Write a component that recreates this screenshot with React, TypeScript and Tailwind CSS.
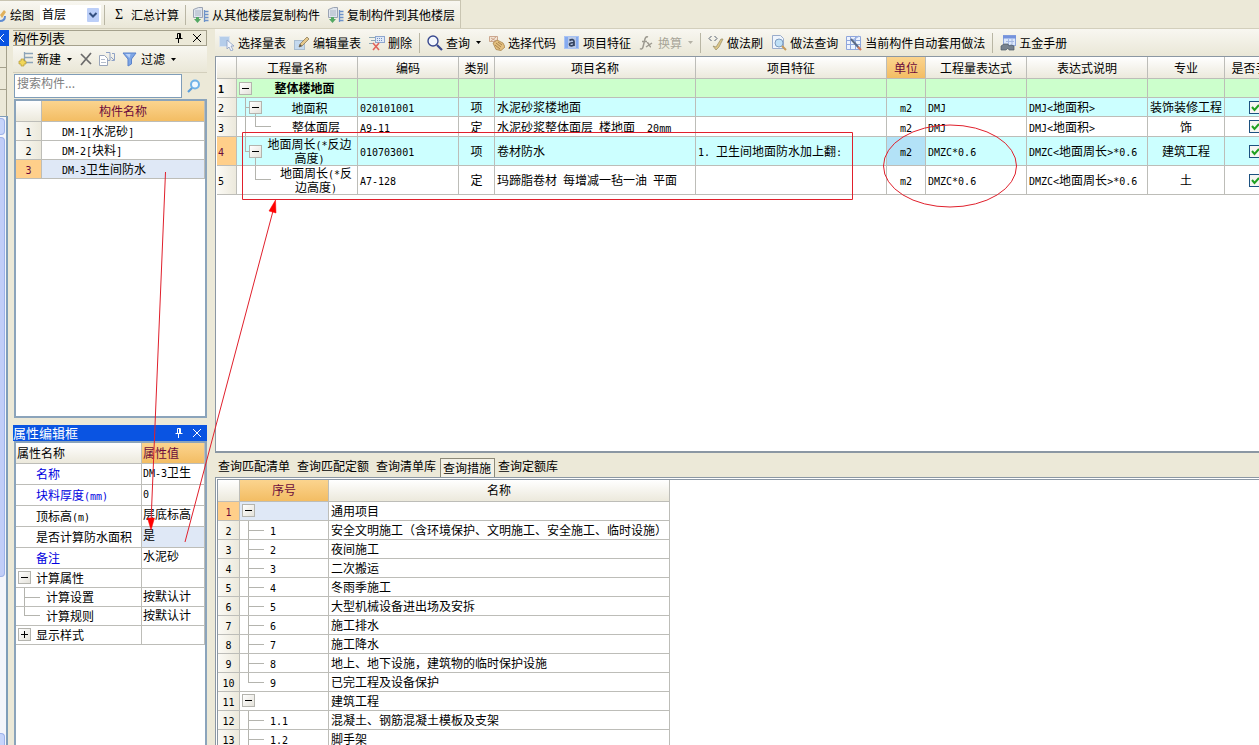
import { Fragment, type ReactNode } from "react";
import clsx from "clsx";

const HEAD = "bg-gradient-to-b from-white to-[#ece9dc]";
const GOLD = "bg-gradient-to-b from-[#fbd48e] to-[#f3bd63] text-[#6b0a3c]";
const NUM = "bg-gradient-to-r from-[#fbfaf5] to-[#ece9dc]";
const CELL = "border-r border-b border-[#bdbdb8] p-0";

// Latin runs use a half-width face so they line up with the Chinese glyphs
function Txt({ children }: { children: string }) {
  return (
    <>
      {children.split(/([\x20-\x7e]+)/).map((part, i) =>
        i % 2 ? (
          <span key={i} className="whitespace-pre-wrap font-['DejaVu_Sans_Mono',monospace] text-[10px] leading-none">
            {part}
          </span>
        ) : (
          <Fragment key={i}>{part}</Fragment>
        )
      )}
    </>
  );
}

function Icon({ children }: { children: ReactNode }) {
  return (
    <svg width="16" height="16" viewBox="0 0 16 16" fill="none" className="shrink-0" aria-hidden="true">
      {children}
    </svg>
  );
}

const SelectIcon = () => (
  <Icon>
    <rect x="0.5" y="1.5" width="10" height="10" fill="#b5cdea" stroke="#dbe4ee" />
    <path d="M8 5v9l2-2 2 4 2-1-2-4h3z" fill="#f3f6fb" stroke="#8c9fc4" strokeWidth="0.8" />
  </Icon>
);

const EditIcon = () => (
  <Icon>
    <rect x="0.5" y="5.5" width="10" height="9" fill="#c4d9ee" stroke="#a9bdd0" />
    <path d="M5 12l1-3 7-7 2 2-7 7z" fill="#e6c98c" stroke="#8d7c5c" strokeWidth="0.8" />
    <path d="M5 12l1-3 2 2z" fill="#555" />
  </Icon>
);

const DeleteIcon = () => (
  <Icon>
    <path d="M0 2.5h6M2 5.5h4M0 8.5h4" stroke="#8fa8b4" />
    <rect x="6.5" y="1.5" width="9" height="6" fill="#dfe9f7" stroke="#8ea6cf" />
    <path d="M8 3.5h6M8 5.5h6" stroke="#7791c4" strokeDasharray="1 1" />
    <path d="M4 8l6 7M10 8l-6 7" stroke="#e0645c" strokeWidth="1.6" />
  </Icon>
);

const FindIcon = () => (
  <Icon>
    <circle cx="6" cy="6" r="5" fill="#f3f7fd" stroke="#39498f" strokeWidth="1.4" />
    <path d="M10 10l5 5" stroke="#39498f" strokeWidth="2.2" />
  </Icon>
);

const CodeIcon = () => (
  <Icon>
    <path d="M0.5 1.5h8v5h-8zM2 3l5 3M7 2L2 6" fill="#f2e3d3" stroke="#c79f85" strokeWidth="0.9" />
    <path d="M4 8l4-3 6 3 2 4-4 3.500-5-1z" fill="#e3bf7e" stroke="#a9844b" strokeWidth="0.8" />
    <path d="M7 8l5 4M9 7l4 3M6 10l5 4" stroke="#9a7440" strokeWidth="0.8" />
  </Icon>
);

const FeatureIcon = () => (
  <Icon>
    <rect x="0.5" y="1.5" width="14" height="12" fill="#86abef" stroke="#a9c3f3" />
    <rect x="4" y="2" width="8" height="11" fill="#b9c9e6" />
    <path d="M5.500 5.500c2-1.500 4.500-1 4.500 1V11M10 7.500c-3 0-4.500.5-4.500 2s3 2 4.500 0" stroke="#33425e" strokeWidth="1.7" />
  </Icon>
);

const FxIcon = () => (
  <Icon>
    <path d="M9 2C7 1 6 3 5.500 6L4 12c-.5 2-2 2.500-3 1.500M3 6.500h5M8 8c2-1 2 4 4 4M13 8L7 12" stroke="#9d9a90" strokeWidth="1.5" />
  </Icon>
);

const BrushIcon = () => (
  <Icon>
    <path d="M3.500 1L1 3.500 3.500 6M6.500 1L9 3.500 6.500 6" stroke="#555f70" />
    <path d="M15 4l-4 8-3 3-3-4 3 1 5-8z" fill="#dcc686" stroke="#9a8c66" strokeWidth="0.7" />
  </Icon>
);

const PageFindIcon = () => (
  <Icon>
    <path d="M1.500 0.500h8l3 3v10h-11z" fill="#eef4fc" stroke="#9aaccb" />
    <circle cx="8" cy="8" r="4" fill="#bfe0f6" stroke="#7d9cc0" />
    <path d="M11 11l4 4" stroke="#c79a5a" strokeWidth="2" />
  </Icon>
);

const AutoIcon = () => (
  <Icon>
    <path d="M0.500 1.500h14v13h-14zM0.500 5.500h14M0.500 9.500h14M4.500 1.500v13M9.500 1.500v13" fill="#edf3fe" stroke="#8fa6dc" />
    <path d="M5 4l8 9" stroke="#5c6a86" strokeWidth="2" />
    <path d="M12 12l3 3" stroke="#d27a5b" strokeWidth="2.2" />
    <path d="M7 5l6-4" stroke="#9db3e2" strokeWidth="1.5" />
  </Icon>
);

const ManualIcon = () => (
  <Icon>
    <rect x="3.5" y="0.5" width="12" height="10" fill="#dbe7fb" stroke="#8ea6dd" />
    <path d="M3 2h13" stroke="#7593dd" strokeWidth="3" />
    <path d="M6 6.500h8M8.500 4v6M12 4v6" stroke="#a5b8e2" />
    <path d="M1 11l3-2h4l1 2 2-1 3 1v4h-5l-1-2-2 2H1z" fill="#77828f" stroke="#4e5966" strokeWidth="0.7" />
  </Icon>
);

const CopyFloorIcon = () => (
  <Icon>
    <path d="M0.500 2.500l5-2h4v10h-9z" fill="#dfe5ee" stroke="#9aa3b2" />
    <path d="M2 4h6M2 6h6M2 8h6" stroke="#aab4c4" />
    <path d="M11.500 3v12M11.500 4.500h4M11.500 7.500h4M11.500 10.500h4M11.500 13.500h4" stroke="#6c92c9" strokeWidth="1.3" />
    <path d="M3 10h3v2h2l-3.500 4L1 12h2z" fill="#53a863" />
  </Icon>
);

const NewIcon = () => (
  <Icon>
    <path d="M6.500 1v11M7 2.500h8M7 6.500h8M7 11.500h8" stroke="#8ba3b8" strokeWidth="1.3" />
    <path d="M3 8h3v2h2v3H6v2H3v-2H1v-3h2z" fill="#f2d75a" stroke="#b19a38" strokeWidth="0.7" />
  </Icon>
);

const CrossIcon = () => (
  <Icon>
    <path d="M3 3l10 10M13 2L3 14" stroke="#6b6b6b" strokeWidth="1.7" />
  </Icon>
);

const CopyIcon = () => (
  <Icon>
    <path d="M0.500 4.500h5l3 3v7h-8z" fill="#fff" stroke="#9aa6bb" />
    <path d="M2 8.500h4M2 11.500h5" stroke="#b4bdcc" />
    <path d="M7 1.500h4v8M11 9.500H9M13 2.500h2.500v7h-3M12 6l3 3" stroke="#8fa2c6" />
  </Icon>
);

const FilterIcon = () => (
  <Icon>
    <path d="M1 2h13L9.500 8v5L6 15V8z" fill="#7ea6e6" stroke="#5b83cb" />
    <path d="M3.500 3h5L7.500 7z" fill="#bcd3f7" />
  </Icon>
);

function Caret({ dim }: { dim?: boolean }) {
  return (
    <svg width="5" height="3" viewBox="0 0 5 3" aria-hidden="true" className={dim ? "fill-[#b5b2a6]" : "fill-black"}>
      <path d="M0 0h5L2.500 3z" />
    </svg>
  );
}

const Sep = () => <div className="mx-[3px] h-5 w-px shrink-0 bg-[#b9b6a4]" />;

type ToolProps = { icon: ReactNode; label: string; caret?: boolean; disabled?: boolean };

function Tool({ icon, label, caret, disabled }: ToolProps) {
  return (
    <button
      type="button"
      disabled={disabled}
      className={clsx("flex shrink-0 items-center gap-[3px] px-1", disabled && "text-[#a8a598]")}
    >
      {icon}
      {label}
      {caret && (
        <span className="pl-[3px]">
          <Caret dim={disabled} />
        </span>
      )}
    </button>
  );
}

function Toggle({ open = true }: { open?: boolean }) {
  return (
    <button
      type="button"
      aria-label={open ? "收起" : "展开"}
      className="flex size-[13px] shrink-0 items-center justify-center border border-[#b4b4ae] bg-gradient-to-br from-white to-[#e4e2da]"
    >
      <svg width="7" height="7" viewBox="0 0 7 7" stroke="#000" aria-hidden="true">
        <path d={open ? "M0 3.500h7" : "M0 3.500h7M3.500 0v7"} />
      </svg>
    </button>
  );
}

function PanelTitle({ title, active }: { title: string; active?: boolean }) {
  return (
    <div
      className={clsx(
        "flex h-4 shrink-0 items-center justify-between border border-l-0 pr-[5px] text-[13px] leading-[14px]",
        active ? "border-[#0a54e2] bg-[#0a54e2] text-white" : "border-[#a5a18c]"
      )}
    >
      <h2>{title}</h2>
      <div className="flex items-center gap-[10px]">
        <button type="button" aria-label="固定">
          <svg width="8" height="10" viewBox="0 0 8 10" fill="none" stroke="currentColor" aria-hidden="true">
            <path d="M2.500 5.500v-5h3v5M4.500 1v4M0.500 5.500h7M3.500 6v4" />
          </svg>
        </button>
        <button type="button" aria-label="关闭">
          <svg width="8" height="8" viewBox="0 0 8 8" stroke="currentColor" aria-hidden="true">
            <path d="M0 0l8 8M8 0L0 8" />
          </svg>
        </button>
      </div>
    </div>
  );
}

function TopBar() {
  return (
    <header className="flex h-[29px] shrink-0 items-center border-b border-[#d3cfbc] bg-[#ece9d8]">
      <div className="flex h-full items-center border-t border-r border-[#c9c5b2] bg-gradient-to-b from-[#f8f7f1] to-[#eae7d7] pr-px">
        <svg width="7" height="16" viewBox="0 0 7 16" aria-hidden="true">
          <path d="M0 8l4-5 2 2-4 6z" fill="#e0b15c" />
          <path d="M0 14c3 0 5-1 5-5" stroke="#5e8bd2" strokeWidth="2" fill="none" />
        </svg>
        <label htmlFor="floor" className="px-[3px]">绘图</label>
        <div className="relative ml-[3px]">
          <select id="floor" className="h-5 w-[61px] appearance-none bg-white pb-0.5 pl-[2px]">
            <option>首层</option>
          </select>
          <svg width="12" height="14" viewBox="0 0 12 14" aria-hidden="true" className="pointer-events-none absolute top-[3px] right-[2px]">
            <rect width="12" height="14" rx="1" fill="#bccff8" />
            <path d="M2.500 5L6 8.500 9.500 5" fill="none" stroke="#34507f" strokeWidth="2" />
          </svg>
        </div>
        <Sep />
        <button type="button" className="flex items-center gap-[7px] pr-[3px] pl-[6px]">
          <span className="w-[10px] font-['Liberation_Serif',serif] text-sm">Σ</span>
          汇总计算
        </button>
        <Sep />
        <Tool icon={<CopyFloorIcon />} label="从其他楼层复制构件" />
        <Tool icon={<CopyFloorIcon />} label="复制构件到其他楼层" />
      </div>
    </header>
  );
}

// Narrow sliver of the docked navigation column
function NavStrip() {
  return (
    <aside className="flex w-[9px] shrink-0 flex-col pt-px">
      <div className="flex h-4 items-center bg-[#0a54e2] text-white">
        <svg width="4" height="8" viewBox="0 0 4 8" stroke="currentColor" aria-hidden="true">
          <path d="M-4 0l8 8M4 0l-8 8" />
        </svg>
      </div>
      <div className="mr-0.5 h-[22px] border-r border-b border-[#a5a18c]" />
      <div className="mr-0.5 h-[22px] border-r border-b border-[#a5a18c]" />
      <div className="mr-0.5 h-[26px] border-r border-[#a5a18c]" />
      <div className="mr-px flex flex-1 flex-col border-t border-r-2 border-[#7f9db9] bg-[#f4f5fb] pr-px">
        <div className="mt-px h-[17px] rounded-r border border-l-0 border-[#9db2ea] bg-[#c6d4fb]" />
        <div className="mt-0.5 h-[70%] rounded-r border border-l-0 border-[#9db2ea] bg-[#c1cdf8]" />
        <div className="mt-auto h-3 rounded-tr border border-b-0 border-l-0 border-[#9db2ea] bg-[#c6d4fb]" />
      </div>
    </aside>
  );
}

const components = ["DM-1[水泥砂]", "DM-2[块料]", "DM-3卫生间防水"];

function ComponentList() {
  return (
    <>
      <PanelTitle title="构件列表" />
      <div className="flex h-[27px] shrink-0 items-center border-b border-[#d3cfbc] bg-gradient-to-b from-[#f8f7f1] to-[#eae7d7] pl-px">
        <Tool icon={<NewIcon />} label="新建" caret />
        <button type="button" aria-label="删除构件" className="px-[2px]"><CrossIcon /></button>
        <button type="button" aria-label="复制构件" className="px-[3px]"><CopyIcon /></button>
        <Tool icon={<FilterIcon />} label="过滤" caret />
      </div>
      <div className="flex h-[26px] shrink-0 items-center gap-[5px] pl-px">
        <input
          type="text"
          aria-label="搜索构件"
          placeholder="搜索构件..."
          className="mb-px h-6 w-[168px] border border-[#7f9db9] bg-white pb-[6px] pl-[2px] placeholder:text-[#808080]"
        />
        <button type="button" aria-label="搜索">
          <svg width="14" height="14" viewBox="0 0 14 14" fill="none" aria-hidden="true">
            <circle cx="8" cy="5.5" r="4" fill="#eff8ff" stroke="#6fb2e8" strokeWidth="2" />
            <path d="M5 9l-4 4" stroke="#5a9ddb" strokeWidth="2.2" />
          </svg>
        </button>
      </div>
      <div className="ml-px min-h-0 flex-[104] overflow-hidden border-2 border-[#8ba4bb] bg-white">
        <table className="w-full table-fixed border-separate border-spacing-0">
          <thead>
            <tr className="h-[21px]">
              <th className={clsx(CELL, HEAD, "w-[26px]")} aria-label="序号" />
              <th className={clsx(CELL, GOLD, "font-normal")}>构件名称</th>
            </tr>
          </thead>
          <tbody>
            {components.map((name, i) => (
              <tr key={name} className="h-[19px]">
                <td className={clsx(CELL, "text-center", i === 2 ? "bg-[#ffcf8a] text-[#6b0a3c]" : NUM)}>
                  <Txt>{String(i + 1)}</Txt>
                </td>
                <td className={clsx(CELL, "pl-5", i === 2 && "bg-[#dfe8f6]")}>
                  <Txt>{name}</Txt>
                </td>
              </tr>
            ))}
          </tbody>
        </table>
      </div>
    </>
  );
}

const props = [
  { name: "名称", value: "DM-3卫生", blue: true },
  { name: "块料厚度(mm)", value: "0", blue: true },
  { name: "顶标高(m)", value: "层底标高" },
  { name: "是否计算防水面积", value: "是", active: true },
  { name: "备注", value: "水泥砂", blue: true },
];

const groupCell = clsx(CELL, "relative");

function PropertyPanel() {
  return (
    <>
      <div className="mt-[7px] shrink-0">
        <PanelTitle title="属性编辑框" active />
      </div>
      <div className="ml-px min-h-0 flex-[100] overflow-hidden border-2 border-b-0 border-[#8ba4bb] bg-white">
        <table className="w-full table-fixed border-separate border-spacing-0">
          <thead>
            <tr className="h-[21px] text-left">
              <th className={clsx(CELL, HEAD, "w-[126px] pl-px font-normal")}>属性名称</th>
              <th className={clsx(CELL, GOLD, "pl-px font-normal")}>属性值</th>
            </tr>
          </thead>
          <tbody>
            {props.map((p) => (
              <tr key={p.name} className="h-[21px] whitespace-nowrap">
                <td className={clsx(CELL, "pt-px pl-5", p.blue && "text-[#0000e0]")}>
                  <Txt>{p.name}</Txt>
                </td>
                <td className={clsx(CELL, "pl-px align-top", p.active && "bg-[#dfe8f6]")}>
                  <Txt>{p.value}</Txt>
                </td>
              </tr>
            ))}
            <tr className="h-[19px]">
              <td className={groupCell}>
                <div className="flex items-center gap-[5px] pl-[2px]"><Toggle />计算属性</div>
              </td>
              <td className={CELL} />
            </tr>
            <tr className="h-[19px]">
              <td className={clsx(groupCell, "pl-[30px]")}>
                <span className="absolute top-0 left-2 h-full border-l border-[#b4b4ae]" />
                <span className="absolute top-1/2 left-2 w-4 border-t border-[#b4b4ae]" />
                计算设置
              </td>
              <td className={clsx(CELL, "pl-px align-top")}>按默认计</td>
            </tr>
            <tr className="h-[19px]">
              <td className={clsx(groupCell, "pl-[30px]")}>
                <span className="absolute top-0 left-2 h-1/2 w-4 border-b border-l border-[#b4b4ae]" />
                计算规则
              </td>
              <td className={clsx(CELL, "pl-px align-top")}>按默认计</td>
            </tr>
            <tr className="h-[19px]">
              <td className={groupCell}>
                <div className="flex items-center gap-[5px] pl-[2px]"><Toggle open={false} />显示样式</div>
              </td>
              <td className={CELL} />
            </tr>
          </tbody>
        </table>
      </div>
    </>
  );
}

function MainToolbar() {
  return (
    <div className="flex h-[27px] shrink-0 items-center overflow-hidden bg-gradient-to-b from-[#f8f7f1] to-[#eae7d7]">
      <Tool icon={<SelectIcon />} label="选择量表" />
      <Tool icon={<EditIcon />} label="编辑量表" />
      <Tool icon={<DeleteIcon />} label="删除" />
      <Sep />
      <Tool icon={<FindIcon />} label="查询" caret />
      <Tool icon={<CodeIcon />} label="选择代码" />
      <Tool icon={<FeatureIcon />} label="项目特征" />
      <Tool icon={<FxIcon />} label="换算" caret disabled />
      <Sep />
      <Tool icon={<BrushIcon />} label="做法刷" />
      <Tool icon={<PageFindIcon />} label="做法查询" />
      <Tool icon={<AutoIcon />} label="当前构件自动套用做法" />
      <Sep />
      <Tool icon={<ManualIcon />} label="五金手册" />
    </div>
  );
}

const columns = [
  { title: "工程量名称", width: "w-[121px]" },
  { title: "编码", width: "w-[101px]" },
  { title: "类别", width: "w-[36px]" },
  { title: "项目名称", width: "w-[201px]" },
  { title: "项目特征", width: "w-[191px]" },
  { title: "单位", width: "w-[39px]" },
  { title: "工程量表达式", width: "w-[101px]" },
  { title: "表达式说明", width: "w-[121px]" },
  { title: "专业", width: "w-[77px]" },
  { title: "是否手动", width: "w-[62px]" },
];

const quantities = [
  { name: "地面积", level: 1, code: "020101001", kind: "项", item: "水泥砂浆楼地面", feature: "", expr: "DMJ", note: "DMJ<地面积>", major: "装饰装修工程", height: "h-[19px]" },
  { name: "整体面层", level: 2, code: "A9-11", kind: "定", item: "水泥砂浆整体面层 楼地面  20mm", feature: "", expr: "DMJ", note: "DMJ<地面积>", major: "饰", height: "h-5" },
  { name: "地面周长(*反边高度)", level: 1, code: "010703001", kind: "项", item: "卷材防水", feature: "1. 卫生间地面防水加上翻:", expr: "DMZC*0.6", note: "DMZC<地面周长>*0.6", major: "建筑工程", height: "h-[29px]" },
  { name: "地面周长(*反边高度)", level: 2, code: "A7-128", kind: "定", item: "玛蹄脂卷材 每增减一毡一油 平面", feature: "", expr: "DMZC*0.6", note: "DMZC<地面周长>*0.6", major: "土", height: "h-[29px]" },
];

const LINE = "absolute border-[#b4b4ae]";

function QuantityGrid() {
  return (
    <div className="min-h-0 flex-1 overflow-hidden border border-r-0 border-b-2 border-[#8b97a3] bg-white pl-px">
      <table className="w-[1070px] table-fixed border-separate border-spacing-0 whitespace-nowrap">
        <thead>
          <tr className="h-[22px]">
            <th className={clsx(CELL, HEAD, "w-5")} aria-label="行号" />
            {columns.map((c) => (
              <th key={c.title} className={clsx(CELL, c.width, "font-normal", c.title === "单位" ? GOLD : HEAD)}>
                {c.title}
              </th>
            ))}
          </tr>
        </thead>
        <tbody>
          <tr className="h-[19px] bg-[#ccffcc]">
            <td className={clsx(CELL, NUM, "pl-px font-bold")}><Txt>1</Txt></td>
            <td className={CELL}>
              <div className="flex items-center pl-[2px] font-bold">
                <Toggle />
                <span className="flex-1 text-center">整体楼地面</span>
              </div>
            </td>
            {columns.slice(1).map((c) => (
              <td key={c.title} className={CELL} />
            ))}
          </tr>
          {quantities.map((q, i) => (
            <tr key={q.code} className={clsx(q.height, q.level === 1 && "bg-[#ccffff]")}>
              <td className={clsx(CELL, "pl-px", i === 2 ? "bg-[#ffcf8a] text-[#6b0a3c]" : NUM)}>
                <Txt>{String(i + 2)}</Txt>
              </td>
              <td className={clsx(CELL, "relative")}>
                {i < 2 && <span className={clsx(LINE, "top-0 left-2 h-full border-l")} />}
                {i === 2 && <span className={clsx(LINE, "top-0 left-2 h-1/2 border-l")} />}
                {q.level === 1 && (
                  <>
                    <span className={clsx(LINE, "top-1/2 left-2 w-1 border-t")} />
                    <span className={clsx(LINE, "top-1/2 bottom-0 left-[18px] border-l")} />
                  </>
                )}
                {q.level === 2 && <span className={clsx(LINE, "top-0 left-[18px] h-1/2 w-4 border-b border-l")} />}
                <div className={clsx("relative flex items-center", q.level === 1 ? "pl-3" : "pl-[38px]")}>
                  {q.level === 1 && <Toggle />}
                  <span className="flex-1 px-1 text-center leading-[13px] break-all whitespace-normal">
                    <Txt>{q.name}</Txt>
                  </span>
                </div>
              </td>
              <td className={clsx(CELL, "pl-[2px]")}><Txt>{q.code}</Txt></td>
              <td className={clsx(CELL, "text-center")}>{q.kind}</td>
              <td className={clsx(CELL, "pl-[2px]")}><Txt>{q.item}</Txt></td>
              <td className={clsx(CELL, "pl-[2px]")}><Txt>{q.feature}</Txt></td>
              <td className={clsx(CELL, "text-center", i === 2 && "bg-[#b3e2f7]")}><Txt>m2</Txt></td>
              <td className={clsx(CELL, "pl-[2px]")}><Txt>{q.expr}</Txt></td>
              <td className={clsx(CELL, "pl-[2px]")}><Txt>{q.note}</Txt></td>
              <td className={clsx(CELL, "text-center")}>{q.major}</td>
              <td className={CELL}>
                <label className="relative mx-auto block size-[13px]">
                  <input
                    type="checkbox"
                    defaultChecked
                    aria-label={q.code}
                    className="peer block size-[13px] appearance-none border border-[#1c5180] bg-[#f6f6f2]"
                  />
                  <svg width="13" height="13" viewBox="0 0 13 13" className="pointer-events-none absolute inset-0 hidden peer-checked:block" aria-hidden="true">
                    <path d="M3 6l2.500 3L10 4" fill="none" stroke="#21a121" strokeWidth="2" />
                  </svg>
                </label>
              </td>
            </tr>
          ))}
        </tbody>
      </table>
    </div>
  );
}

const tabs = ["查询匹配清单", "查询匹配定额", "查询清单库", "查询措施", "查询定额库"];

const measures = [
  { no: "", name: "通用项目" },
  { no: "1", name: "安全文明施工\uff08含环境保护、文明施工、安全施工、临时设施\uff09" },
  { no: "2", name: "夜间施工" },
  { no: "3", name: "二次搬运" },
  { no: "4", name: "冬雨季施工" },
  { no: "5", name: "大型机械设备进出场及安拆" },
  { no: "6", name: "施工排水" },
  { no: "7", name: "施工降水" },
  { no: "8", name: "地上、地下设施\uff0c建筑物的临时保护设施" },
  { no: "9", name: "已完工程及设备保护", last: true },
  { no: "", name: "建筑工程" },
  { no: "1.1", name: "混凝土、钢筋混凝土模板及支架" },
  { no: "1.2", name: "脚手架" },
];

function MeasurePanel() {
  return (
    <>
      <div role="tablist" className="mt-[5px] flex h-[19px] shrink-0 items-start">
        {tabs.map((t) => {
          const on = t === "查询措施";
          return (
            <button
              key={t}
              type="button"
              role="tab"
              aria-selected={on}
              className={clsx(
                "border-x pr-[3px] pl-[2px]",
                on ? "h-full border-t border-[#8c8978] bg-[#f3f1e6] pt-px" : "border-transparent"
              )}
            >
              {t}
            </button>
          );
        })}
      </div>
      <div className="h-[36vh] shrink-0 overflow-hidden border-t border-l border-[#8b97a3] bg-white pt-px pl-px">
        <div className="h-full border-t border-l border-[#8b97a3]">
          <table className="w-[452px] table-fixed border-separate border-spacing-0">
            <thead>
              <tr className="h-[22px]">
                <th className={clsx(CELL, HEAD, "w-[22px]")} aria-label="行号" />
                <th className={clsx(CELL, GOLD, "w-[89px] font-normal")}>序号</th>
                <th className={clsx(CELL, HEAD, "font-normal")}>名称</th>
              </tr>
            </thead>
            <tbody>
              {measures.map((m, i) => (
                <tr key={m.name} className="h-[19px] whitespace-nowrap">
                  <td className={clsx(CELL, "text-center", i === 0 ? "bg-[#ffcf8a] text-[#6b0a3c]" : NUM)}>
                    <Txt>{String(i + 1)}</Txt>
                  </td>
                  <td className={clsx(CELL, "relative", i === 0 && "bg-[#dfe8f6]")}>
                    {m.no ? (
                      <>
                        <span className={clsx(LINE, "top-0 left-2 border-l", m.last ? "h-1/2" : "h-full")} />
                        <span className={clsx(LINE, "top-1/2 left-2 w-4 border-t")} />
                        <div className="pt-px pl-[30px]"><Txt>{m.no}</Txt></div>
                      </>
                    ) : (
                      <div className="pl-[2px]"><Toggle /></div>
                    )}
                  </td>
                  <td className={clsx(CELL, "pl-[2px]")}>{m.name}</td>
                </tr>
              ))}
            </tbody>
          </table>
        </div>
      </div>
    </>
  );
}

// Red review marks drawn over the window
function Markup() {
  return (
    <svg width="1259" height="745" fill="none" stroke="#e0202c" className="pointer-events-none absolute top-0 left-0" aria-hidden="true">
      <path d="M242.500 132.500h610v67h-610z" />
      <ellipse cx="950" cy="166" rx="66.5" ry="41" />
      <path d="M165.500 172L151 522M185 542L273 211" />
      <path d="M151 530l-3.500-12h7zM275.500 200l-6.500 11 7 2z" fill="#f00" stroke="#f00" strokeWidth="0.5" />
    </svg>
  );
}

export default function App() {
  return (
    <div className="relative flex h-screen flex-col overflow-hidden bg-[#ece9d8] font-['Noto_Sans_CJK_SC',sans-serif] text-xs text-black">
      <TopBar />
      <div className="flex min-h-0 flex-1">
        <NavStrip />
        <section className="ml-1 flex w-[194px] shrink-0 flex-col pt-px">
          <ComponentList />
          <PropertyPanel />
        </section>
        <main className="ml-2 flex min-w-0 flex-1 flex-col">
          <MainToolbar />
          <QuantityGrid />
          <MeasurePanel />
        </main>
      </div>
      <Markup />
    </div>
  );
}
